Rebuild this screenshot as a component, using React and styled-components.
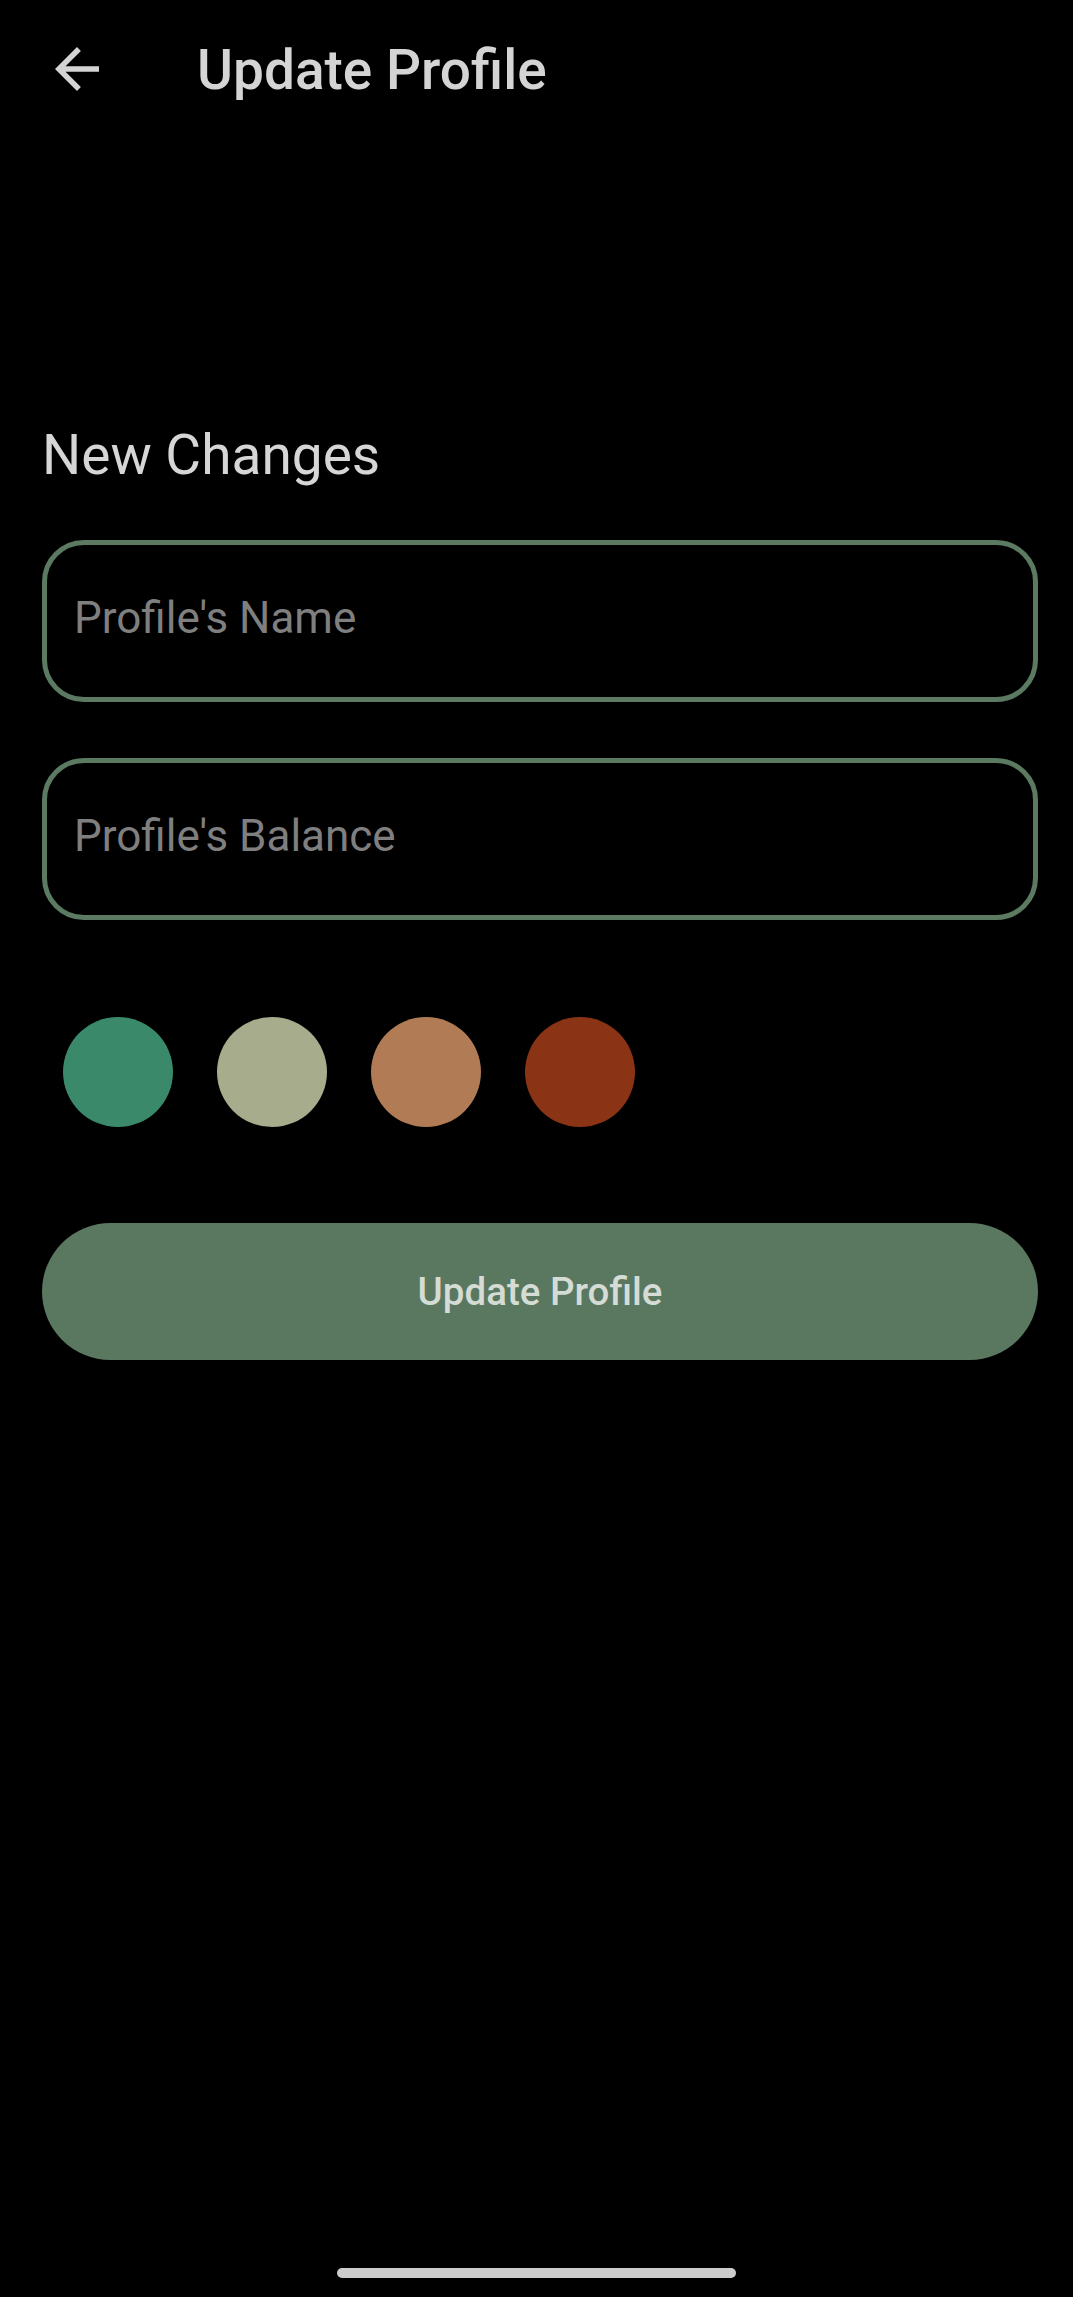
import styled, { createGlobalStyle } from "styled-components";

const GlobalStyle = createGlobalStyle`
    html, body {
        margin: 0;
        padding: 0;
        background: #000;
    }
    * {
        box-sizing: border-box;
    }
`

const Screen = styled.div`
    min-height: 100vh;
    display: flex;
    flex-direction: column;
    background: #000;
    font-family: Roboto, "Liberation Sans", sans-serif;
`

const TopBar = styled.header`
    height: 140px;
    display: flex;
    align-items: center;
    padding-left: 44px;
`

const BackButton = styled.button`
    width: 66px;
    height: 66px;
    padding: 0;
    border: none;
    background: transparent;
    color: #d4d4d4;
    display: flex;
    align-items: center;
    justify-content: center;
    cursor: pointer;
    margin-top: -3px;
`

const Title = styled.h1`
    margin: 0 0 0 87px;
    font-size: 55px;
    line-height: 1;
    font-weight: 500;
    color: #d4d4d4;
`

const Content = styled.main`
    padding: 282px 35px 0 42px;
    display: flex;
    flex-direction: column;
`

const SectionTitle = styled.h2`
    margin: 0 0 52px 0;
    font-size: 55px;
    line-height: 66px;
    font-weight: 400;
    color: #d6d6d6;
`

const Field = styled.input`
    width: 100%;
    height: 162px;
    border: 5px solid #5b7a61;
    border-radius: 42px;
    background: transparent;
    padding: 0 27px 6px 27px;
    font-family: Roboto, "Liberation Sans", sans-serif;
    font-size: 44px;
    color: #d6d6d6;
    outline: none;
    margin-bottom: ${p => p.$last ? "97px" : "56px"};

    &::placeholder {
        color: #7f7f7f;
    }
`

const Swatches = styled.div`
    display: flex;
    gap: 44px;
    padding-left: 21px;
    margin-bottom: 96px;
`

const Swatch = styled.button`
    width: 110px;
    height: 110px;
    border-radius: 50%;
    border: none;
    padding: 0;
    background: ${p => p.$color};
    cursor: pointer;
`

const SubmitButton = styled.button`
    width: 100%;
    height: 137px;
    border: none;
    border-radius: 69px;
    background: #5a7860;
    color: #d5dbd5;
    font-family: Roboto, "Liberation Sans", sans-serif;
    font-size: 38.5px;
    font-weight: 500;
    cursor: pointer;
`

const NavArea = styled.div`
    margin-top: auto;
    display: flex;
    justify-content: center;
    padding-bottom: 19px;
`

const HomeIndicator = styled.div`
    width: 399px;
    height: 10px;
    border-radius: 5px;
    background: #cccccc;
`

const colors = ["#3a896b", "#a7ad8c", "#b07b55", "#8a3315"]

function App() {
    return (
        <Screen>
            <GlobalStyle />
            <TopBar>
                <BackButton aria-label="back">
                    <svg width="66" height="66" viewBox="0 0 24 24" fill="currentColor">
                        <path d="M20 11H7.83l5.59-5.59L12 4l-8 8 8 8 1.41-1.41L7.83 13H20v-2z" />
                    </svg>
                </BackButton>
                <Title>Update Profile</Title>
            </TopBar>

            <Content>
                <SectionTitle>New Changes</SectionTitle>
                <Field type="text" placeholder="Profile's Name" />
                <Field type="text" placeholder="Profile's Balance" $last />
                <Swatches>
                    {colors.map(c => <Swatch key={c} $color={c} />)}
                </Swatches>
                <SubmitButton>Update Profile</SubmitButton>
            </Content>

            <NavArea>
                <HomeIndicator />
            </NavArea>
        </Screen>
    )
}

export default App
